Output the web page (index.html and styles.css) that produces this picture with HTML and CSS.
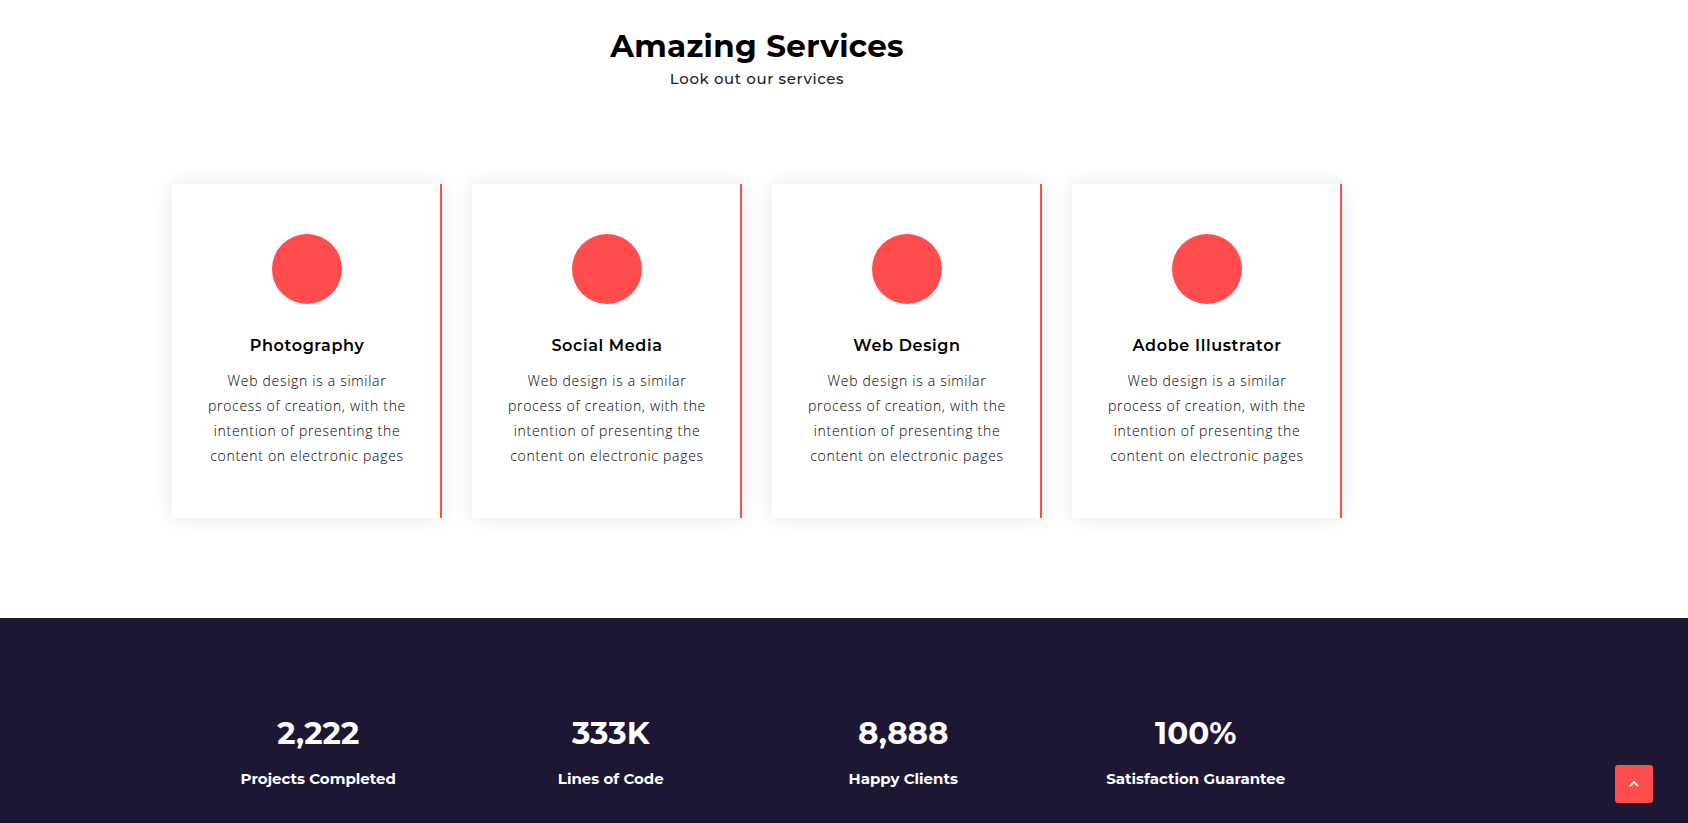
FILE: index.html
```html
<!DOCTYPE html>
<html lang="en">
<head>
<meta charset="utf-8">
<title>Amazing Services</title>
<link rel="stylesheet" href="styles.css">
</head>
<body>
<section class="services">
  <div class="container">
    <header class="heading">
      <h2>Amazing Services</h2>
      <p>Look out our services</p>
    </header>
    <div class="cards">
      <article class="card"><span class="icon"></span><h3>Photography</h3><p>Web design is a similar process of creation, with the intention of presenting the content on electronic pages</p></article>
      <article class="card"><span class="icon"></span><h3>Social Media</h3><p>Web design is a similar process of creation, with the intention of presenting the content on electronic pages</p></article>
      <article class="card"><span class="icon"></span><h3>Web Design</h3><p>Web design is a similar process of creation, with the intention of presenting the content on electronic pages</p></article>
      <article class="card"><span class="icon"></span><h3>Adobe Illustrator</h3><p>Web design is a similar process of creation, with the intention of presenting the content on electronic pages</p></article>
    </div>
  </div>
</section>
<section class="counters">
  <div class="container stats">
    <div class="stat"><h2>2,222</h2><p>Projects Completed</p></div>
    <div class="stat"><h2>333K</h2><p>Lines of Code</p></div>
    <div class="stat"><h2>8,888</h2><p>Happy Clients</p></div>
    <div class="stat"><h2>100%</h2><p>Satisfaction Guarantee</p></div>
  </div>
</section>
<a class="to-top" href="#" aria-label="Back to top"><svg viewBox="0 0 10 10" width="10" height="10"><path d="M1 7 5 3 9 7" fill="none" stroke="#fff" stroke-width="1.8"/></svg></a>
</body>
</html>
```
FILE: styles.css
```css
* { box-sizing: border-box; margin: 0; padding: 0; }
body {
  font-family: "Open Sans", sans-serif;
  background: #fff;
  color: #000;
  min-height: 100vh;
  display: flex;
  flex-direction: column;
}
h2, h3, .heading p, .stat p { font-family: Montserrat, Inter, sans-serif; }
.container { width: 100%; max-width: 1200px; margin-left: 157px; padding: 0 15px; }
.services { padding: 25px 0 100px; }
.heading { text-align: center; margin-bottom: 93px; }
.heading h2 { font-size: 31px; line-height: 42px; font-weight: 700; letter-spacing: 0.01em; }
.heading p { font-size: 15px; line-height: 24px; font-weight: 500; color: #222; letter-spacing: 0.04em; }
.cards { display: grid; grid-template-columns: repeat(4, 1fr); gap: 30px; }
.card {
  box-shadow: inset -2px 0 #ff4d4d, 0 0 20px rgba(0, 0, 0, 0.1);
  padding: 50px 30px;
  text-align: center;
}
.icon { display: block; width: 70px; height: 70px; margin: 0 auto 30px; border-radius: 50%; background: #ff4d4d; }
.card h3 { font-size: 16px; line-height: 24px; font-weight: 600; letter-spacing: 0.04em; margin-bottom: 10px; }
.card p { font-size: 14px; line-height: 25px; font-weight: 300; color: #000; letter-spacing: 0.05em; }
.counters { flex: 1; background: #1d1733; color: #fff; padding: 94px 0 30px; border-bottom: 1px solid #161127; }
.stats { display: grid; grid-template-columns: repeat(4, 1fr); text-align: center; }
.stat h2 { font-size: 31px; line-height: 42px; font-weight: 700; }
.stat p { font-size: 15px; line-height: 26px; font-weight: 700; margin-top: 12px; }
.to-top {
  position: fixed; right: 35px; bottom: 20px; width: 38px; height: 38px;
  display: flex; align-items: center; justify-content: center;
  background: #ff4d4d; border-radius: 3px;
}
```
